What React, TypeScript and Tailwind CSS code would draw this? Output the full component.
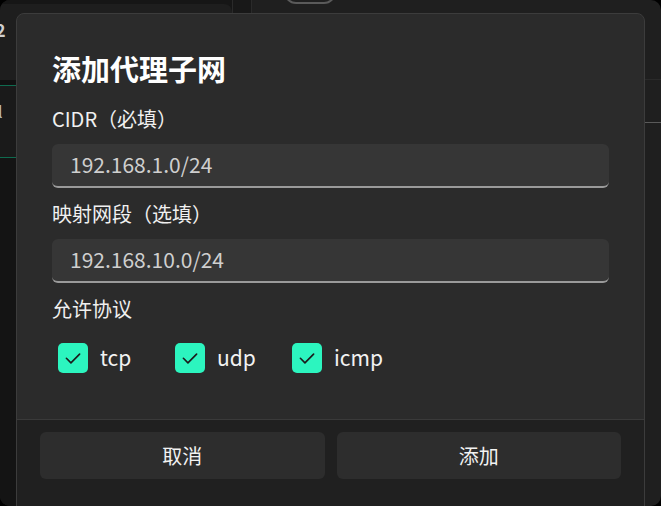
import React, { useState } from 'react';

const font = { fontFamily: '"Noto Sans CJK SC", "Noto Sans", sans-serif' };

function CheckMark() {
  return (
    <svg viewBox="0 0 16 16" className="h-[22px] w-[22px]" fill="none">
      <path d="M3.2 8.2l3.3 3.3L12.8 5.2" stroke="#1b1b1b" strokeWidth="1.2" strokeLinecap="round" strokeLinejoin="round" />
    </svg>
  );
}

function ProtocolCheck({ label, checked, onToggle }: { label: string; checked: boolean; onToggle: () => void }) {
  return (
    <button onClick={onToggle} className="flex w-[117px] items-center gap-3 text-left">
      <span
        className={`flex h-[30px] w-[30px] items-center justify-center rounded-[5px] ${
          checked ? 'bg-[#2cf5bf]' : 'border border-[#8a8a8a] bg-transparent'
        }`}
      >
        {checked && <CheckMark />}
      </span>
      <span className="text-[21px] text-[#f2f2f2]">{label}</span>
    </button>
  );
}

function Field({ label, value }: { label: string; value: string }) {
  return (
    <div className="flex flex-col">
      <label className="mb-[11px] h-[28px] text-[20px] leading-[28px] text-[#f0f0f0]">{label}</label>
      <div className="flex h-[44px] items-center rounded-[6px] border-b-2 border-b-[#9a9a9a] bg-[#363636] px-[18px]">
        <span className="text-[21px] text-[#cfcfcf]">{value}</span>
      </div>
    </div>
  );
}

export default function App() {
  const [protocols, setProtocols] = useState<Record<string, boolean>>({ tcp: true, udp: true, icmp: true });

  const toggle = (p: string) => setProtocols({ ...protocols, [p]: !protocols[p] });

  return (
    <div className="h-[506px] w-[661px] overflow-hidden bg-black" style={font}>
      <div className="relative flex h-full w-full overflow-hidden rounded-[10px] bg-[#1f1f1f]">
        {/* app behind the dialog */}
        <div className="flex w-[232px] flex-col bg-[#141414]">
          <div className="flex h-[80px] flex-col bg-[#161616] pt-[4px]">
            <div className="h-[76px] rounded-tr-[8px] bg-[#1e1e1e] pt-[12px] text-[18px] font-bold text-[#cfcfcf]">
              <span className="-ml-[5px]">2</span>
            </div>
          </div>
          <div className="h-[5px] bg-[#111]" />
          <div className="flex h-[73px] items-center border-y border-[#0f6b4f] bg-[#1a1a1a] pb-[22px] text-[16px] text-[#bbb]">
            <span className="-ml-[2px]">l</span>
          </div>
        </div>
        <div className="w-[20px] border-x border-[#2a2a2a] bg-[#181818]" />
        <div className="flex flex-1 flex-col">
          <div className="flex h-[80px] items-start border-b border-[#2a2a2a] pl-[32px]">
            <div className="-mt-[20px] h-[24px] w-[52px] rounded-full border-2 border-[#5a5a5a]" />
          </div>
          <div className="h-[43px] border-b border-[#5a5a5a]" />
        </div>

        {/* dialog */}
        <div className="absolute left-[16px] top-[13px] flex h-[520px] w-[629px] flex-col overflow-hidden rounded-[8px] border border-[#3c3c3c] bg-[#2b2b2b]">
          <div className="flex h-[405px] flex-col px-[35px] pt-[34px]">
            <h2 className="mb-[17px] h-[40px] text-[29px] font-bold leading-[40px] text-white">添加代理子网</h2>
            <div className="flex flex-col gap-[12px]">
              <Field label="CIDR（必填）" value="192.168.1.0/24" />
              <Field label="映射网段（选填）" value="192.168.10.0/24" />
            </div>
            <div className="mt-[12px] h-[28px] text-[20px] leading-[28px] text-[#f0f0f0]">允许协议</div>
            <div className="mt-[19px] flex pl-[6px]">
              {['tcp', 'udp', 'icmp'].map((p) => (
                <ProtocolCheck key={p} label={p} checked={protocols[p]} onToggle={() => toggle(p)} />
              ))}
            </div>
          </div>
          <div className="flex flex-1 gap-[12px] border-t border-[#3a3a3a] bg-[#202020] px-[23px] pt-[12px]">
            <button className="h-[47px] flex-1 rounded-[6px] bg-[#2d2d2d] text-[20px] text-[#f2f2f2]">取消</button>
            <button className="h-[47px] flex-1 rounded-[6px] bg-[#2d2d2d] text-[20px] text-[#f2f2f2]">添加</button>
          </div>
        </div>
      </div>
    </div>
  );
}
